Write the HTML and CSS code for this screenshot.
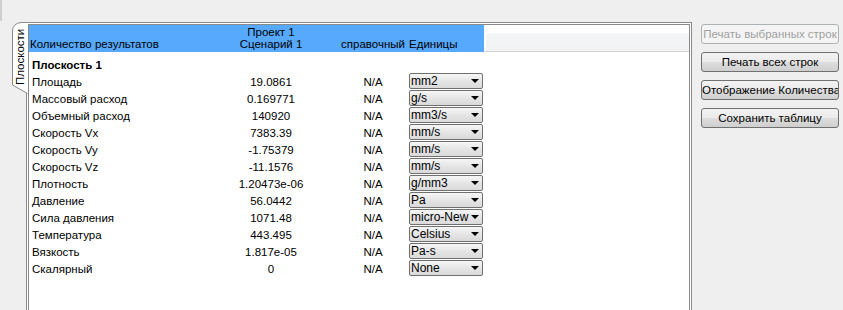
FILE: index.html
```html
<!DOCTYPE html>
<html lang="ru">
<head>
<meta charset="utf-8">
<link rel="stylesheet" href="styles.css">
</head>
<body>
<div class="main">
  <div class="topbar"><div class="stub"></div></div>
  <div class="workspace">
    <div class="tabstrip">
      <div class="tab">
        <svg class="tab-shape" width="17" height="74" viewBox="0 0 17 74">
          <path d="M16.5,0.5 L10,0.5 Q1.5,1.5 1.5,9 L1.5,63 L16.5,71.5" fill="#ffffff" stroke="#8a8a8a" stroke-width="1"/>
        </svg>
        <span class="tab-label">Плоскости</span>
      </div>
    </div>
    <div class="panel">
      <div class="panel-inner">
        <div class="head">
          <div class="hcell c-name">Количество результатов</div>
          <div class="hcell c-val center">Проект 1<br>Сценарий 1</div>
          <div class="hcell c-ref center">справочный</div>
          <div class="hcell c-unit">Единицы</div>
          <div class="hrest"></div>
        </div>
        <div class="body">
          <div class="row group"><div class="c-name">Плоскость 1</div></div>
          <div class="row"><div class="c-name">Площадь</div><div class="c-val center">19.0861</div><div class="c-ref center">N/A</div><div class="c-unit"><div class="dd"><span class="dd-text">mm2</span><span class="dd-arrow"></span></div></div></div>
          <div class="row"><div class="c-name">Массовый расход</div><div class="c-val center">0.169771</div><div class="c-ref center">N/A</div><div class="c-unit"><div class="dd"><span class="dd-text">g/s</span><span class="dd-arrow"></span></div></div></div>
          <div class="row"><div class="c-name">Объемный расход</div><div class="c-val center">140920</div><div class="c-ref center">N/A</div><div class="c-unit"><div class="dd"><span class="dd-text">mm3/s</span><span class="dd-arrow"></span></div></div></div>
          <div class="row"><div class="c-name">Скорость Vx</div><div class="c-val center">7383.39</div><div class="c-ref center">N/A</div><div class="c-unit"><div class="dd"><span class="dd-text">mm/s</span><span class="dd-arrow"></span></div></div></div>
          <div class="row"><div class="c-name">Скорость Vy</div><div class="c-val center">-1.75379</div><div class="c-ref center">N/A</div><div class="c-unit"><div class="dd"><span class="dd-text">mm/s</span><span class="dd-arrow"></span></div></div></div>
          <div class="row"><div class="c-name">Скорость Vz</div><div class="c-val center">-11.1576</div><div class="c-ref center">N/A</div><div class="c-unit"><div class="dd"><span class="dd-text">mm/s</span><span class="dd-arrow"></span></div></div></div>
          <div class="row"><div class="c-name">Плотность</div><div class="c-val center">1.20473e-06</div><div class="c-ref center">N/A</div><div class="c-unit"><div class="dd"><span class="dd-text">g/mm3</span><span class="dd-arrow"></span></div></div></div>
          <div class="row"><div class="c-name">Давление</div><div class="c-val center">56.0442</div><div class="c-ref center">N/A</div><div class="c-unit"><div class="dd"><span class="dd-text">Pa</span><span class="dd-arrow"></span></div></div></div>
          <div class="row"><div class="c-name">Сила давления</div><div class="c-val center">1071.48</div><div class="c-ref center">N/A</div><div class="c-unit"><div class="dd"><span class="dd-text">micro-New</span><span class="dd-arrow"></span></div></div></div>
          <div class="row"><div class="c-name">Температура</div><div class="c-val center">443.495</div><div class="c-ref center">N/A</div><div class="c-unit"><div class="dd"><span class="dd-text">Celsius</span><span class="dd-arrow"></span></div></div></div>
          <div class="row"><div class="c-name">Вязкость</div><div class="c-val center">1.817e-05</div><div class="c-ref center">N/A</div><div class="c-unit"><div class="dd"><span class="dd-text">Pa-s</span><span class="dd-arrow"></span></div></div></div>
          <div class="row"><div class="c-name">Скалярный</div><div class="c-val center">0</div><div class="c-ref center">N/A</div><div class="c-unit"><div class="dd"><span class="dd-text">None</span><span class="dd-arrow"></span></div></div></div>
        </div>
      </div>
    </div>
  </div>
</div>
<div class="side">
  <button class="btn disabled">Печать выбранных строк</button>
  <button class="btn">Печать всех строк</button>
  <button class="btn">Отображение Количества</button>
  <button class="btn">Сохранить таблицу</button>
</div>
</body>
</html>
```

FILE: styles.css
```css
html, body {
  margin: 0;
  padding: 0;
  height: 100%;
  overflow: hidden;
}
body {
  background: #efefef;
  font-family: "Liberation Sans", Arial, sans-serif;
  font-size: 11.5px;
  color: #000;
  display: flex;
  align-items: flex-start;
}
.main {
  width: 692px;
  display: flex;
  flex-direction: column;
}
.topbar {
  height: 22px;
}
.stub {
  width: 2px;
  height: 21px;
  background: #cfcfcf;
}
.workspace {
  display: flex;
  align-items: flex-start;
}
.tabstrip {
  width: 26px;
  flex: none;
}
.tab {
  position: relative;
  z-index: 1;
  margin-left: 11px;
  width: 17px;
  height: 74px;
}
.tab-shape {
  position: absolute;
  left: 0;
  top: 0;
}
.tab-label {
  position: absolute;
  left: 2px;
  top: 10px;
  width: 14px;
  height: 53px;
  writing-mode: vertical-rl;
  transform: rotate(180deg);
  line-height: 14px;
  text-align: center;
  white-space: nowrap;
}
.panel {
  width: 666px;
  height: 300px;
  box-sizing: border-box;
  border: 1px solid #8a8a8a;
  padding: 1px;
  background: #fff;
}
.panel-inner {
  height: 100%;
  box-sizing: border-box;
  border: 1px solid #8a8a8a;
  border-bottom: none;
  background: #fff;
}
.head {
  display: flex;
  height: 27px;
}
.hcell {
  background: #57a9fd;
  display: flex;
  flex-direction: column;
  justify-content: flex-end;
  line-height: 12px;
  padding-bottom: 2px;
  box-sizing: border-box;
  white-space: nowrap;
}
.hcell.center {
  align-items: center;
  text-align: center;
}
.head .c-name {
  padding-left: 1px;
}
.head .c-unit {
  padding-left: 2px;
}
.hrest {
  flex: 1;
  border-left: 2px solid #fff;
  border-bottom: 1px solid #d5d5d5;
  background: linear-gradient(#ffffff 0, #ffffff 8px, #f4f5f6 9px, #f1f2f3 100%);
}
.c-name {
  width: 174px;
  flex: none;
  box-sizing: border-box;
}
.c-val {
  width: 136px;
  flex: none;
}
.c-ref {
  width: 68px;
  flex: none;
}
.c-unit {
  width: 77px;
  flex: none;
  box-sizing: border-box;
}
.body {
  padding-top: 4px;
}
.row {
  display: flex;
  height: 17px;
  align-items: center;
  white-space: nowrap;
}
.row .c-name {
  padding-left: 3px;
}
.row .c-unit {
  padding-left: 2px;
  align-self: flex-start;
}
.group {
  font-weight: bold;
}
.center {
  text-align: center;
}
.dd {
  width: 74px;
  height: 16px;
  box-sizing: border-box;
  border: 1px solid #707070;
  border-radius: 2px;
  background: linear-gradient(#f6f6f6, #e4e4e4 55%, #dadada);
  display: flex;
  align-items: center;
  overflow: hidden;
}
.dd-text {
  flex: 1;
  overflow: hidden;
  padding-left: 1px;
  line-height: 14px;
  height: 14px;
  margin-right: 1px;
  font-size: 12px;
}
.dd-arrow {
  flex: none;
  width: 0;
  height: 0;
  border-left: 4px solid transparent;
  border-right: 4px solid transparent;
  border-top: 4px solid #000;
  margin-right: 3px;
  margin-left: 1px;
}
.side {
  padding-top: 24px;
  margin-left: 9px;
  display: flex;
  flex-direction: column;
  gap: 8px;
}
.btn {
  width: 138px;
  height: 20px;
  box-sizing: border-box;
  font-family: "Liberation Sans", Arial, sans-serif;
  font-size: 11.5px;
  color: #000;
  border: 1px solid #707070;
  border-radius: 3px;
  background: linear-gradient(#f2f2f2, #ebebeb 50%, #dddddd 51%, #cfcfcf);
  padding: 0;
  white-space: nowrap;
  overflow: hidden;
}
.btn.disabled {
  color: #a0a0a0;
  border-color: #adb2b5;
  background: #f4f4f4;
}
```
